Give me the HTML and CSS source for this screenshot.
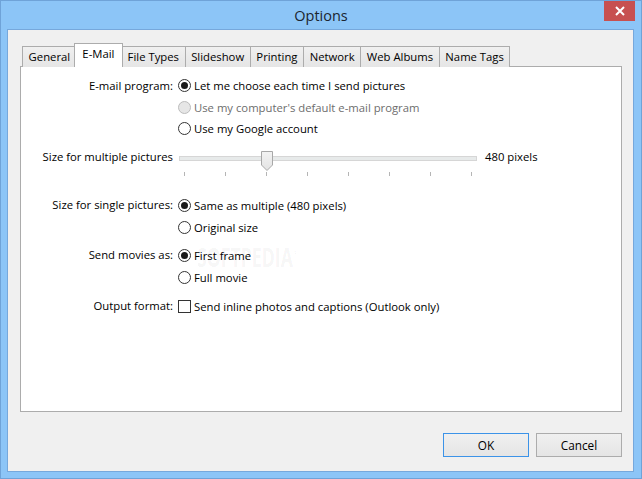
FILE: index.html
```html
<!DOCTYPE html>
<html>
<head>
<meta charset="utf-8">
<title>Options</title>
<link rel="stylesheet" href="styles.css">
</head>
<body>
<div class="window">
  <div class="titlebar">
    <span class="title">Options</span>
    <div class="close">
      <svg width="10" height="10" viewBox="0 0 10 10"><path d="M1 1 L9 9 M9 1 L1 9" stroke="#fff" stroke-width="2" fill="none"/></svg>
    </div>
  </div>
  <div class="client">
    <div class="tabs">
      <div class="tab">General</div>
      <div class="tab active">E-Mail</div>
      <div class="tab">File Types</div>
      <div class="tab">Slideshow</div>
      <div class="tab">Printing</div>
      <div class="tab">Network</div>
      <div class="tab">Web Albums</div>
      <div class="tab">Name Tags</div>
    </div>
    <div class="panel">
      <div class="field f-program">
        <div class="label">E-mail program:</div>
        <div class="options">
          <div class="opt"><span class="radio checked"></span>Let me choose each time I send pictures</div>
          <div class="opt disabled"><span class="radio"></span>Use my computer's default e-mail program</div>
          <div class="opt"><span class="radio"></span>Use my Google account</div>
        </div>
      </div>
      <div class="field f-slider">
        <div class="label">Size for multiple pictures</div>
        <div class="slider">
          <div class="track"></div>
          <div class="thumb">
            <svg width="12" height="20" viewBox="0 0 12 20"><defs><linearGradient id="tg" x1="0" y1="0" x2="0" y2="1"><stop offset="0" stop-color="#f3f3f3"/><stop offset="1" stop-color="#e3e3e3"/></linearGradient></defs><path d="M0.5 0.5 H11.5 V14 L6 19.5 L0.5 14 Z" fill="url(#tg)" stroke="#a8a8a8"/></svg>
          </div>
          <div class="ticks"><i></i><i></i><i></i><i></i><i></i><i></i><i></i><i></i></div>
        </div>
        <div class="value">480 pixels</div>
      </div>
      <div class="field f-single">
        <div class="label">Size for single pictures:</div>
        <div class="options">
          <div class="opt"><span class="radio checked"></span>Same as multiple (480 pixels)</div>
          <div class="opt"><span class="radio"></span>Original size</div>
        </div>
      </div>
      <div class="field f-movies">
        <div class="label">Send movies as:</div>
        <div class="options">
          <div class="opt"><span class="radio checked"></span>First frame</div>
          <div class="opt"><span class="radio"></span>Full movie</div>
        </div>
      </div>
      <div class="field f-output">
        <div class="label">Output format:</div>
        <div class="options">
          <div class="opt"><span class="check"></span>Send inline photos and captions (Outlook only)</div>
        </div>
      </div>
      <div class="watermark">SOFTPEDIA<sup>®</sup></div>
    </div>
    <div class="buttons">
      <div class="btn default">OK</div>
      <div class="btn">Cancel</div>
    </div>
  </div>
</div>
</body>
</html>
```

FILE: styles.css
```css
* { box-sizing: border-box; }
html, body { margin: 0; padding: 0; }
body {
  width: 642px;
  height: 479px;
  overflow: hidden;
  font-family: "Open Sans", "Noto Sans", sans-serif;
  font-size: 11.3px;
  color: #000;
}
.window {
  width: 642px;
  height: 479px;
  background: #8cc5f7;
  border: 1px solid #6fa3d8;
  display: flex;
  flex-direction: column;
}
.titlebar {
  height: 28px;
  position: relative;
  display: flex;
  justify-content: center;
  align-items: center;
}
.title {
  font-size: 14.5px;
  color: #1b2530;
}
.close {
  position: absolute;
  top: 0;
  right: 6px;
  width: 31px;
  height: 20px;
  background: #c75050;
  display: flex;
  align-items: center;
  justify-content: center;
}
.client {
  flex: 1;
  margin: 0 7px 6px 6px;
  background: #f0f0f0;
  border: 1px solid #76a8dc;
  display: flex;
  flex-direction: column;
}
.tabs {
  display: flex;
  margin: 13px 0 0 14px;
  height: 23px;
  position: relative;
  z-index: 1;
}
.tab {
  margin-top: 3px;
  height: 21px;
  padding: 0 5.6px;
  line-height: 19px;
  border: 1px solid #acacac;
  border-bottom: none;
  margin-right: -1px;
  background: linear-gradient(#f0f0f0, #e5e5e5);
  white-space: nowrap;
}
.tab.active {
  margin-top: 0;
  height: 24px;
  background: #fff;
  margin-left: -2px;
  margin-right: -2px;
  padding: 0 7.6px;
  line-height: 20px;
  position: relative;
  z-index: 2;
}
.panel {
  flex: 1;
  margin: 0 11px 0 12px;
  background: #fff;
  border: 1px solid #acacac;
  padding-top: 8px;
  position: relative;
}
.field {
  display: flex;
}
.label {
  width: 152px;
  flex: none;
  text-align: right;
  line-height: 22px;
  height: 22px;
  margin-right: 5px;
  white-space: nowrap;
}
.opt {
  height: 22px;
  display: flex;
  align-items: center;
  white-space: nowrap;
}
.f-program .opt { height: 21.5px; }
.f-program .label { line-height: 21.5px; }
.opt.disabled { color: #6d6d6d; }
.radio {
  width: 13px;
  height: 13px;
  border: 1px solid #333;
  border-radius: 50%;
  background: #fff;
  margin-right: 3px;
  flex: none;
  display: flex;
  align-items: center;
  justify-content: center;
}
.radio.checked::after {
  content: "";
  width: 7px;
  height: 7px;
  border-radius: 50%;
  background: #1a1a1a;
}
.opt.disabled .radio {
  border-color: #bcbcbc;
  background: #e6e6e6;
}
.check {
  width: 13px;
  height: 13px;
  border: 1px solid #333;
  background: #fff;
  margin-right: 3px;
  flex: none;
}
.f-slider { margin-top: 6.5px; height: 30px; }
.f-single { margin-top: 18px; }
.f-movies { margin-top: 6px; }
.f-output { margin-top: 7px; }
.f-slider .label { margin-right: 6px; }
.slider {
  width: 298px;
  position: relative;
}
.track {
  margin-top: 10px;
  height: 5px;
  background: #e7eaea;
  border: 1px solid #d6d6d6;
}
.thumb {
  position: absolute;
  left: 82px;
  top: 5px;
  width: 12px;
  height: 20px;
}
.thumb svg { display: block; }
.ticks {
  margin-top: 11px;
  height: 4px;
  padding: 0 5px;
  display: flex;
  justify-content: space-between;
}
.ticks i {
  width: 1px;
  height: 4px;
  background: #b5b5b5;
}
.value {
  margin-left: 8px;
  line-height: 22px;
  white-space: nowrap;
}
.watermark {
  position: absolute;
  left: 176px;
  top: 172px;
  font-size: 26px;
  font-weight: bold;
  color: rgba(0, 0, 0, 0.05);
  transform: scaleX(0.68);
  transform-origin: left top;
  white-space: nowrap;
}
.watermark sup { font-size: 9px; }
.buttons {
  display: flex;
  justify-content: flex-end;
  gap: 7px;
  margin: 21px 11px 14px 0;
}
.btn {
  width: 86px;
  height: 24px;
  border: 1px solid #acacac;
  background: linear-gradient(#f0f0f0, #e5e5e5);
  display: flex;
  align-items: center;
  justify-content: center;
  font-size: 11.8px;
}
.btn.default { border-color: #3c93e8; }
```
